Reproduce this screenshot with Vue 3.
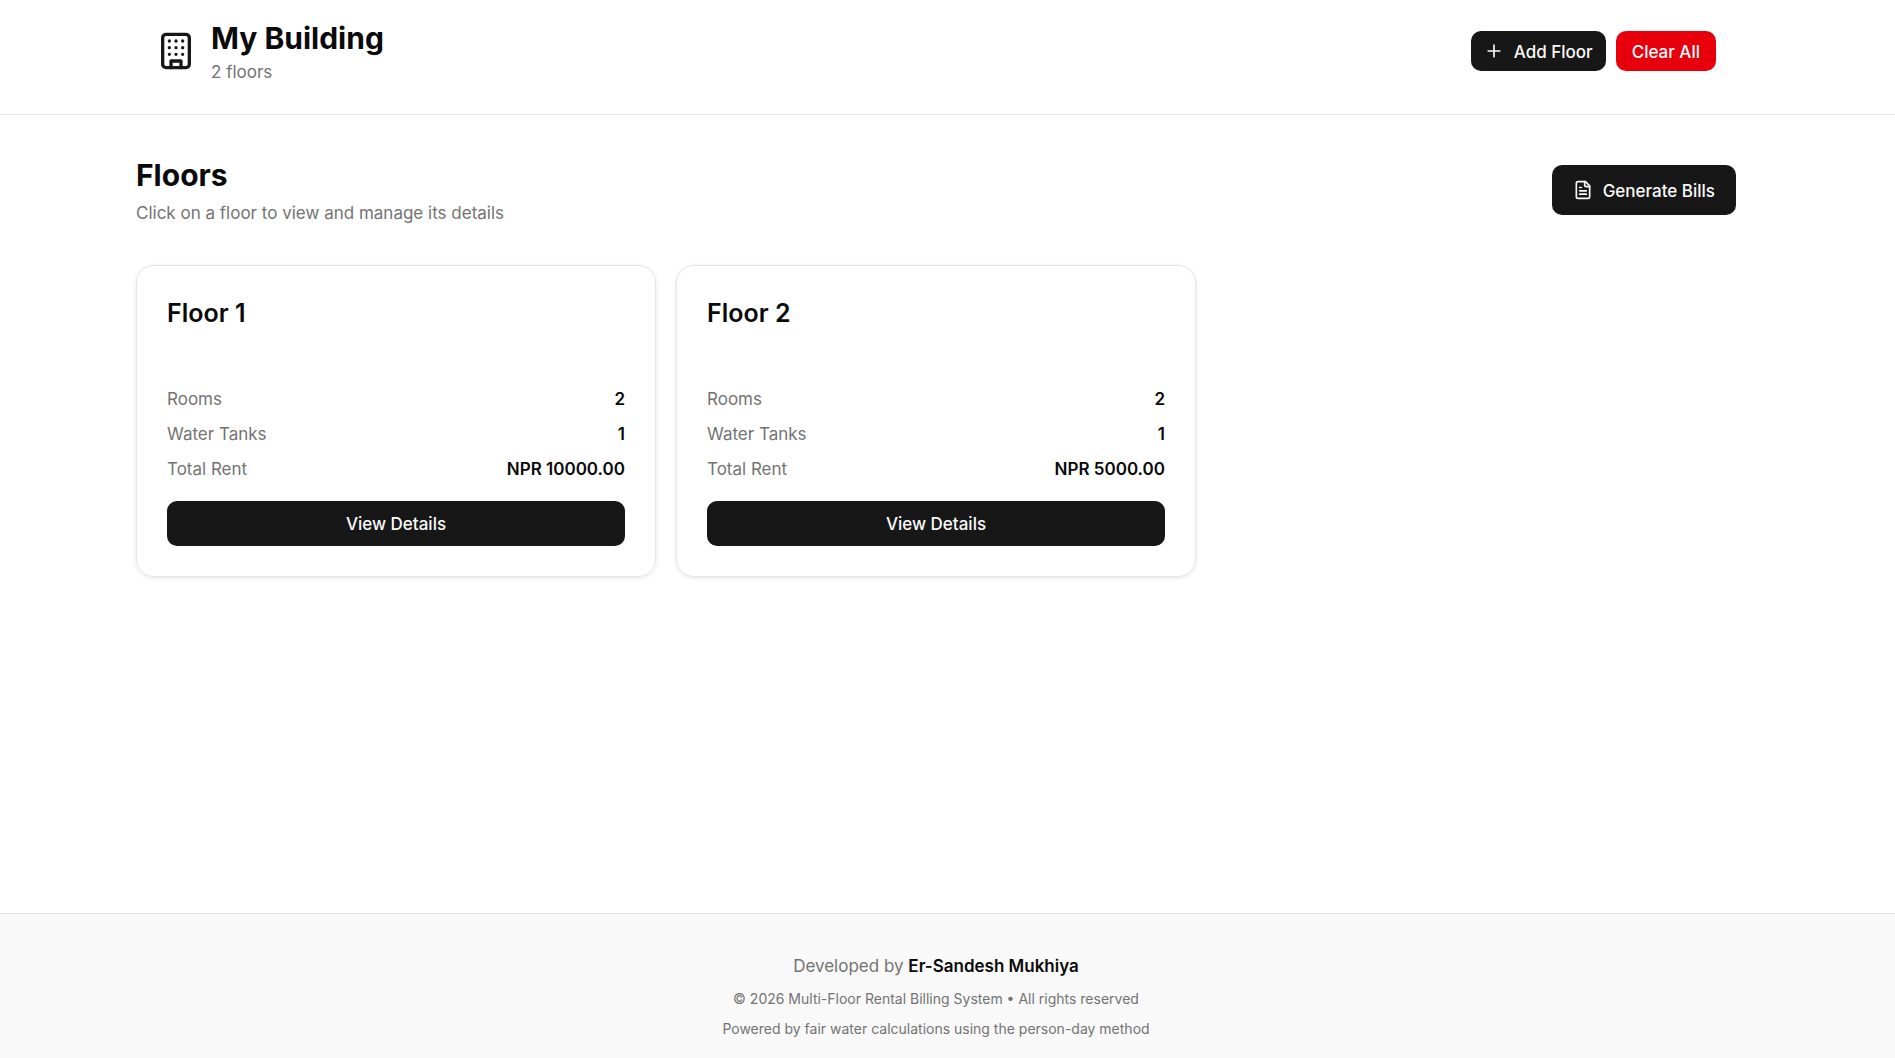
<template>
  <div class="page">
    <header class="site-header">
      <div class="container header-inner">
        <div class="brand">
          <svg class="brand-icon" viewBox="0 0 24 24" aria-hidden="true">
            <rect x="4" y="2" width="16" height="20" rx="2" />
            <path d="M9 22v-4h6v4" />
            <path d="M8 6h.01M12 6h.01M16 6h.01M8 10h.01M12 10h.01M16 10h.01M8 14h.01M12 14h.01M16 14h.01" />
          </svg>
          <div>
            <h1 class="heading">My Building</h1>
            <p class="muted">{{ floors.length }} floors</p>
          </div>
        </div>
        <div class="header-actions">
          <button class="btn btn-add" type="button" @click="addFloor">
            <svg class="icon" viewBox="0 0 24 24" aria-hidden="true">
              <path d="M5 12h14M12 5v14" />
            </svg>
            <span>Add Floor</span>
          </button>
          <button class="btn btn-danger" type="button" @click="clearAll">
            <span>Clear All</span>
          </button>
        </div>
      </div>
    </header>

    <main class="main">
      <div class="container">
        <div class="section-header">
          <div>
            <h2 class="heading">Floors</h2>
            <p class="muted intro">Click on a floor to view and manage its details</p>
          </div>
          <button class="btn btn-generate" type="button">
            <svg class="icon" viewBox="0 0 24 24" aria-hidden="true">
              <path d="M15 2H6a2 2 0 0 0-2 2v16a2 2 0 0 0 2 2h12a2 2 0 0 0 2-2V7Z" />
              <path d="M14 2v4a2 2 0 0 0 2 2h4" />
              <path d="M10 9H8M16 13H8M16 17H8" />
            </svg>
            <span>Generate Bills</span>
          </button>
        </div>

        <div class="floor-grid">
          <article v-for="floor in floors" :key="floor.id" class="card">
            <h3>{{ floor.name }}</h3>
            <dl>
              <div class="row">
                <dt>Rooms</dt>
                <dd>{{ floor.rooms }}</dd>
              </div>
              <div class="row">
                <dt>Water Tanks</dt>
                <dd>{{ floor.tanks }}</dd>
              </div>
              <div class="row">
                <dt>Total Rent</dt>
                <dd>NPR {{ floor.rent.toFixed(2) }}</dd>
              </div>
            </dl>
            <button class="btn btn-details" type="button">
              <span>View Details</span>
            </button>
          </article>
        </div>
      </div>
    </main>

    <footer class="site-footer">
      <p class="muted">Developed by <strong>Er-Sandesh Mukhiya</strong></p>
      <p class="small">© 2026 Multi-Floor Rental Billing System • All rights reserved</p>
      <p class="small">Powered by fair water calculations using the person-day method</p>
    </footer>
  </div>
</template>

<script setup>
import { ref } from 'vue'

const floors = ref([
  { id: 1, name: 'Floor 1', rooms: 2, tanks: 1, rent: 10000 },
  { id: 2, name: 'Floor 2', rooms: 2, tanks: 1, rent: 5000 }
])

const addFloor = () => {
  const id = floors.value.length + 1
  floors.value.push({ id, name: `Floor ${id}`, rooms: 0, tanks: 0, rent: 0 })
}

const clearAll = () => {
  floors.value = []
}
</script>

<style>
body {
  margin: 0;
  background: #fff;
}
</style>

<style scoped>
.page {
  --gutter: 23px;
  min-height: 100vh;
  display: flex;
  flex-direction: column;
  font-family: Inter, "Liberation Sans", sans-serif;
  font-size: 17px;
  line-height: 25px;
  color: #0a0a0a;
}

h1,
h2,
h3,
p,
dl,
dd {
  margin: 0;
}

.site-header,
.main,
.site-footer {
  padding-right: var(--gutter);
}

.site-header {
  border-bottom: 1px solid #e5e5e5;
}

.container {
  box-sizing: border-box;
  width: 100%;
  max-width: 1600px;
  margin: 0 auto;
}

.header-inner {
  display: flex;
  align-items: center;
  justify-content: space-between;
  padding: 17px 20px 29px;
}

.brand {
  display: flex;
  align-items: center;
  gap: 15px;
}

.brand-icon,
.icon {
  flex: none;
  fill: none;
  stroke: currentColor;
  stroke-width: 2;
  stroke-linecap: round;
  stroke-linejoin: round;
}

.brand-icon {
  width: 40px;
  height: 40px;
  color: #171717;
}

.icon {
  width: 20px;
  height: 20px;
}

.heading {
  font-size: 30px;
  line-height: 43px;
  font-weight: 700;
}

.muted {
  color: #737373;
}

.header-actions {
  display: flex;
  gap: 10px;
}

.btn {
  display: flex;
  align-items: center;
  justify-content: center;
  gap: 10px;
  height: 40px;
  padding: 0 15px;
  border: 0;
  border-radius: 10px;
  background: #171717;
  color: #fafafa;
  font-family: inherit;
  font-size: 17px;
  line-height: 25px;
  font-weight: 500;
  white-space: nowrap;
  cursor: pointer;
}

.btn span {
  padding-top: 2px;
}

.btn-add {
  padding: 0 13px;
}

.btn-danger {
  padding: 0 16px;
  background: #e7000b;
  color: #fff;
}

.btn-generate {
  height: 50px;
  padding: 0 21px;
}

.main {
  flex: 1;
  padding-top: 39px;
}

.section-header {
  display: flex;
  align-items: center;
  justify-content: space-between;
  margin-bottom: 39px;
}

.intro {
  margin-top: 4px;
}

.floor-grid {
  display: grid;
  grid-template-columns: repeat(3, 1fr);
  gap: 20px;
}

.card {
  padding: 30px;
  border: 1px solid #e5e5e5;
  border-radius: 18px;
  box-shadow: 0 1px 4px rgba(0, 0, 0, 0.1);
}

.card h3 {
  font-size: 25px;
  line-height: 35px;
  font-weight: 600;
  margin-bottom: 56px;
}

.row {
  display: flex;
  justify-content: space-between;
  margin-bottom: 10px;
}

.row dt {
  color: #737373;
}

.row dd {
  font-weight: 600;
}

.btn-details {
  width: 100%;
  height: 45px;
  margin-top: 19px;
}

.site-footer {
  display: flex;
  flex-direction: column;
  align-items: center;
  gap: 10px;
  padding-top: 40px;
  padding-bottom: 19px;
  border-top: 1px solid #e5e5e5;
  background: #f9f9f9;
}

.site-footer strong {
  color: #0a0a0a;
  font-weight: 600;
}

.small {
  font-size: 14px;
  line-height: 20px;
  color: #737373;
}
</style>
